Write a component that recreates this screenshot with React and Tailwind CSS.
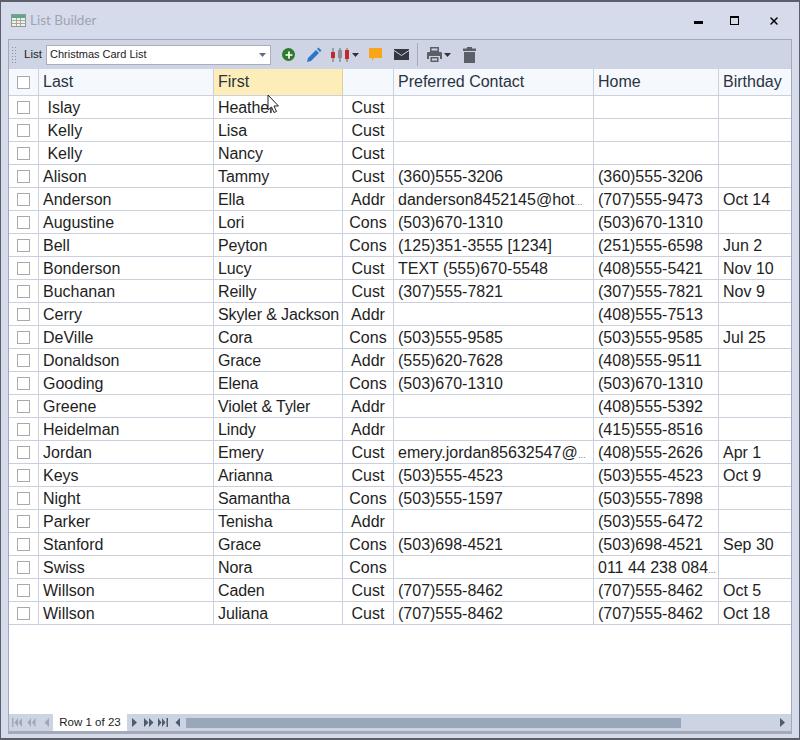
import React from "react";
import { Plus, X } from "lucide-react";

const Dots = () => <span className="text-[8px] leading-none">…</span>;

const rows = [
  ["\u00a0Islay", "Heather", "Cust", "", "", ""],
  ["\u00a0Kelly", "Lisa", "Cust", "", "", ""],
  ["\u00a0Kelly", "Nancy", "Cust", "", "", ""],
  ["Alison", "Tammy", "Cust", "(360)555-3206", "(360)555-3206", ""],
  ["Anderson", "Ella", "Addr", <>danderson8452145@hot<Dots /></>, "(707)555-9473", "Oct 14"],
  ["Augustine", "Lori", "Cons", "(503)670-1310", "(503)670-1310", ""],
  ["Bell", "Peyton", "Cons", "(125)351-3555 [1234]", "(251)555-6598", "Jun 2"],
  ["Bonderson", "Lucy", "Cust", "TEXT (555)670-5548", "(408)555-5421", "Nov 10"],
  ["Buchanan", "Reilly", "Cust", "(307)555-7821", "(307)555-7821", "Nov 9"],
  ["Cerry", "Skyler & Jackson", "Addr", "", "(408)555-7513", ""],
  ["DeVille", "Cora", "Cons", "(503)555-9585", "(503)555-9585", "Jul 25"],
  ["Donaldson", "Grace", "Addr", "(555)620-7628", "(408)555-9511", ""],
  ["Gooding", "Elena", "Cons", "(503)670-1310", "(503)670-1310", ""],
  ["Greene", "Violet & Tyler", "Addr", "", "(408)555-5392", ""],
  ["Heidelman", "Lindy", "Addr", "", "(415)555-8516", ""],
  ["Jordan", "Emery", "Cust", <>emery.jordan85632547@<Dots /></>, "(408)555-2626", "Apr 1"],
  ["Keys", "Arianna", "Cust", "(503)555-4523", "(503)555-4523", "Oct 9"],
  ["Night", "Samantha", "Cons", "(503)555-1597", "(503)555-7898", ""],
  ["Parker", "Tenisha", "Addr", "", "(503)555-6472", ""],
  ["Stanford", "Grace", "Cons", "(503)698-4521", "(503)698-4521", "Sep 30"],
  ["Swiss", "Nora", "Cons", "", <>011 44 238 084<Dots /></>, ""],
  ["Willson", "Caden", "Cust", "(707)555-8462", "(707)555-8462", "Oct 5"],
  ["Willson", "Juliana", "Cust", "(707)555-8462", "(707)555-8462", "Oct 18"],
];

const Check = () => (
  <div className="w-[13px] h-[13px] border border-[#a9a9a9] bg-white" />
);

const Caret = () => (
  <svg width="7" height="4" viewBox="0 0 7 4" className="ml-[2px]">
    <path d="M0 0h7L3.500 4z" fill="#333" />
  </svg>
);

// small triangle nav arrows for the pager, bars on the ends
const Nav = ({ d, color, w = 10, className }) => (
  <svg width={w} height="9" viewBox={`0 0 ${w} 9`} className={className}>
    <path d={d} fill={color} />
  </svg>
);

const Row = ({ row }) => (
  <div className="flex h-[23px] border-b border-[#ccd0dc] text-[16px] leading-[24px] text-[#1e1e1e]">
    <div className="w-[30px] shrink-0 border-r border-[#ccd0dc] flex items-center justify-center">
      <Check />
    </div>
    <div className="w-[175px] shrink-0 border-r border-[#ccd0dc] pl-[4px] whitespace-pre">{row[0]}</div>
    <div className="w-[129px] shrink-0 border-r border-[#ccd0dc] pl-[4px] whitespace-nowrap tracking-[-0.1px]">{row[1]}</div>
    <div className="w-[51px] shrink-0 border-r border-[#ccd0dc] text-center">{row[2]}</div>
    <div className="w-[200px] shrink-0 border-r border-[#ccd0dc] pl-[4px] whitespace-nowrap">{row[3]}</div>
    <div className="w-[125px] shrink-0 border-r border-[#ccd0dc] pl-[4px] whitespace-nowrap">{row[4]}</div>
    <div className="flex-1 pl-[4px] whitespace-nowrap">{row[5]}</div>
  </div>
);

export default function App() {
  return (
    <div className="relative w-[800px] h-[740px] flex flex-col bg-[#d6dbeb] border border-[#5a5f6b] border-t-2 border-b-2 font-['Liberation_Sans',sans-serif] overflow-hidden">
      {/* title bar */}
      <div className="h-[37px] shrink-0 flex items-center pl-[10px] pr-[19px]">
        <svg width="15" height="13" viewBox="0 0 15 13">
          <rect x="0.5" y="0.5" width="14" height="12" fill="#eef0ea" stroke="#8c9a94" />
          <rect x="1" y="1" width="13" height="3" fill="#5aa888" />
          <path d="M1 6.500h13M1 9.500h13M5.500 4v8M9.500 4v8" stroke="#a8a89a" />
        </svg>
        <span className="ml-[4px] text-[13.5px] text-[#9ea4b3] font-['Lato',sans-serif]">List Builder</span>
        <div className="ml-auto flex items-center">
          <div className="w-[9px] h-[3px] bg-black mt-[4px]" />
          <div className="ml-[27px] w-[9px] h-[9px] border border-black border-t-2" />
          <X size={12} strokeWidth={3} className="ml-[29px] text-black" />
        </div>
      </div>

      {/* main panel */}
      <div className="ml-[7px] mr-[7px] h-[695px] shrink-0 flex flex-col border border-[#a3a9b8] border-b-[3px]">
        {/* toolbar */}
        <div className="h-[29px] shrink-0 flex items-center bg-[#ced4e3] text-[11.5px] text-[#222]">
          <div className="ml-[2px] w-[6px] h-[18px] bg-[radial-gradient(#8b92a3_0.8px,transparent_1px)] bg-[length:3px_3px]" />
          <span className="ml-[7px] w-[18px]">List</span>
          <div className="ml-[4px] w-[225px] h-[20px] flex items-center bg-white border border-[#a9aeba] pl-[3px] text-[11px] text-[#222]">
            Christmas Card List
            <svg width="7" height="4" viewBox="0 0 7 4" className="ml-auto mr-[4px]">
              <path d="M0 0h7L3.500 4z" fill="#5b7085" />
            </svg>
          </div>
          <div className="ml-[11px] w-[13px] h-[13px] rounded-full bg-[#2c7a2c] flex items-center justify-center">
            <Plus size={10} strokeWidth={4} className="text-white" />
          </div>
          <svg width="16" height="16" viewBox="0 0 16 16" className="ml-[11px]">
            <path d="M1 15l1-4 8-8 3 3-8 8z" fill="#2e75c9" />
            <path d="M11 2l1.500-1.500 3 3L14 5z" fill="#2e75c9" />
          </svg>
          <svg width="20" height="16" viewBox="0 0 20 16" className="ml-[8px]">
            <path d="M3 1v14M10 1v14M17 1v14" stroke="#666" />
            <rect x="1" y="5" width="4" height="6" fill="#c62828" />
            <rect x="8" y="3" width="4" height="8" fill="#8a8f99" />
            <rect x="15" y="3" width="4" height="9" fill="#c62828" />
          </svg>
          <Caret />
          <svg width="13" height="13" viewBox="0 0 13 13" className="ml-[10px]">
            <path d="M0 0h13v10H5l-2 3v-3H0z" fill="#f9a51a" />
          </svg>
          <svg width="15" height="11" viewBox="0 0 15 11" className="ml-[12px]">
            <rect width="15" height="11" fill="#343840" />
            <path d="M0 1.500l7.500 5 7.500-5" fill="none" stroke="#ced4e3" />
          </svg>
          <div className="ml-[8px] w-px h-[23px] bg-[#a3a9b8]" />
          <svg width="15" height="15" viewBox="0 0 15 15" className="ml-[9px]">
            <path fillRule="evenodd" d="M3 0h9v5H3zM4.500 1.500v2h6v-2zM1 5h13a1 1 0 0 1 1 1v6h-2V9H2v3H0V6a1 1 0 0 1 1-1zM3.500 10h8v5h-8zM5 11.500v2h5v-2z" fill="#5a5f68" />
          </svg>
          <Caret />
          <svg width="13" height="16" viewBox="0 0 13 16" className="ml-[12px]">
            <path d="M4 0h5v1.500h4V4H0V1.500h4zM1 5h11v11H1z" fill="#5a5f68" />
          </svg>
        </div>

        {/* grid */}
        <div className="flex-1 flex flex-col bg-white min-h-0">
          <div className="h-[27px] shrink-0 flex border-b border-[#ccd0dc] bg-[#f5f9fe] text-[16px] leading-[25px] text-[#2b3340]">
            <div className="w-[30px] shrink-0 border-r border-[#ccd0dc] flex items-center justify-center">
              <Check />
            </div>
            <div className="w-[175px] shrink-0 border-r border-[#ccd0dc] pl-[4px]">Last</div>
            <div className="w-[129px] shrink-0 border-r border-[#e0cf95] pl-[4px] bg-[#fdedb8]">First</div>
            <div className="w-[51px] shrink-0 border-r border-[#ccd0dc]" />
            <div className="w-[200px] shrink-0 border-r border-[#ccd0dc] pl-[4px]">Preferred Contact</div>
            <div className="w-[125px] shrink-0 border-r border-[#ccd0dc] pl-[4px]">Home</div>
            <div className="flex-1 pl-[4px] whitespace-nowrap">Birthday</div>
          </div>
          {rows.map((row, i) => (
            <Row key={i} row={row} />
          ))}
          <div className="flex-1" />
          {/* pager + horizontal scrollbar */}
          <div className="h-[17px] shrink-0 flex items-center bg-[#ccd3e2]">
            <div className="w-[44px] pl-[3px] flex items-center shrink-0">
              <Nav d="M0 0h1.500v9H0zM6 0v9L2.500 4.500zM10 0v9L6.500 4.500z" color="#a0a8b8" />
              <Nav d="M4 0v9L0.500 4.500zM8.500 0v9L5 4.500z" color="#a0a8b8" w={9} className="ml-[5px]" />
              <Nav d="M5 0v9L0.500 4.500z" color="#a0a8b8" w={6} className="ml-[8px]" />
            </div>
            <div className="w-[74px] h-full shrink-0 bg-white flex items-center justify-center text-[11.5px] text-[#222]">
              Row 1 of 23
            </div>
            <Nav d="M0 0v9l5-4.500z" color="#4f5b6e" w={6} className="ml-[5px]" />
            <Nav d="M0 0v9l4.500-4.500zM5 0v9l4.500-4.500z" color="#4f5b6e" className="ml-[6px]" />
            <Nav d="M0 0v9l3.500-4.500zM4 0v9l3.500-4.500zM8.500 0h1.500v9H8.500z" color="#4f5b6e" className="ml-[4px]" />
            <Nav d="M5 0v9L0.500 4.500z" color="#4f5b6e" w={6} className="ml-[7px]" />
            <div className="ml-[5px] w-[495px] h-[10px] bg-[#9aa7ba]" />
            <div className="flex-1" />
            <Nav d="M0 0v9l5-4.500z" color="#4f5b6e" w={6} className="mr-[5px]" />
          </div>
        </div>
      </div>

      {/* mouse pointer */}
      <svg width="13" height="20" viewBox="0 0 13 20" className="absolute left-[266px] top-[92px]">
        <path d="M1 1v15l3.500-3 2.500 5.500 2.500-1-2.500-5.500h4.500z" fill="#fff" stroke="#222" />
      </svg>
    </div>
  );
}
